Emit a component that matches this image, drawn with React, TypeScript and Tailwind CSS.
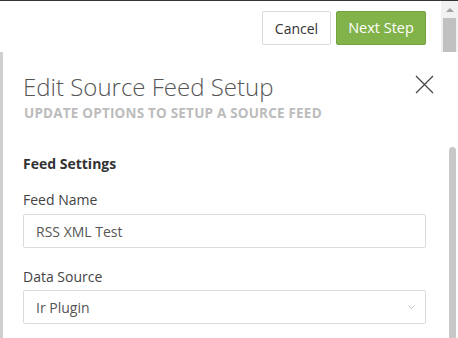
import React from 'react'

const App: React.FC = () => {
  return (
    <div className="flex h-[338px] w-[458px] flex-col overflow-hidden border-t border-[#333] bg-white font-['Open_Sans',sans-serif]">
      {/* Top action bar */}
      <div className="flex h-[51px] shrink-0">
        <div className="flex flex-1 items-start justify-end gap-[5px] pr-[15px] pt-[10px]">
          <button className="h-[34px] w-[69px] rounded-[2px] border border-[#dcdcdc] bg-white text-[14px] text-[#333]">
            Cancel
          </button>
          <button className="h-[34px] w-[90px] rounded-[2px] border border-[#74a23f] bg-[#82b24a] text-[14.5px] font-medium text-white">
            Next Step
          </button>
        </div>
        {/* Scrollbar */}
        <div className="flex w-[17px] flex-col items-center bg-[#f1f1f1]">
          <div className="mt-[7px] h-0 w-0 border-x-[4px] border-b-[4px] border-x-transparent border-b-[#a3a3a3]"></div>
          <div className="mt-[6px] h-[35px] w-[13px] bg-[#c1c1c1]"></div>
        </div>
      </div>

      {/* Panel */}
      <div className="flex flex-1 border-l-[3px] border-[#cfcfcf]">
        <div className="flex-1 pl-[20px] pr-[23px] pt-[20px]">
          <div className="flex items-start justify-between">
            <h1 className="text-[24px] font-light leading-[30px] text-[#555]">
              Edit Source Feed Setup
            </h1>
            <svg width="19" height="19" viewBox="0 0 19 19" className="mr-[-8px] mt-[3px] text-[#444]">
              <path d="M1 1L18 18M18 1L1 18" stroke="currentColor" strokeWidth="1.2" />
            </svg>
          </div>
          <p className="ml-[1px] mt-[2px] text-[13.5px] font-bold leading-[18px] tracking-[0.2px] text-[#bcbcbc]">
            UPDATE OPTIONS TO SETUP A SOURCE FEED
          </p>

          <h2 className="mt-[31px] text-[14px] font-bold text-[#333]">Feed Settings</h2>

          <label className="mt-[15px] block text-[14px] text-[#444]">Feed Name</label>
          <div className="mt-[4px] flex h-[34px] items-center rounded-[2px] border border-[#dcdcdc] px-[12px] text-[14px] text-[#555]">
            RSS XML Test
          </div>

          <label className="mt-[18px] block text-[14px] text-[#444]">Data Source</label>
          <div className="mt-[3px] flex h-[34px] items-center justify-between rounded-[2px] border border-[#dcdcdc] pl-[12px] pr-[10px] text-[14px] text-[#555]">
            <span>Ir Plugin</span>
            <svg width="7" height="4" viewBox="0 0 7 4" className="text-[#b5b5b5]">
              <path d="M0.5 0.5L3.5 3.5L6.5 0.5" fill="none" stroke="currentColor" strokeWidth="0.8" />
            </svg>
          </div>
        </div>
        {/* Inner scrollbar */}
        <div className="w-[9px] pt-[95px]">
          <div className="h-full w-[7px] rounded-t-[4px] bg-[#c8c8c8]"></div>
        </div>
      </div>
    </div>
  )
}

export default App
